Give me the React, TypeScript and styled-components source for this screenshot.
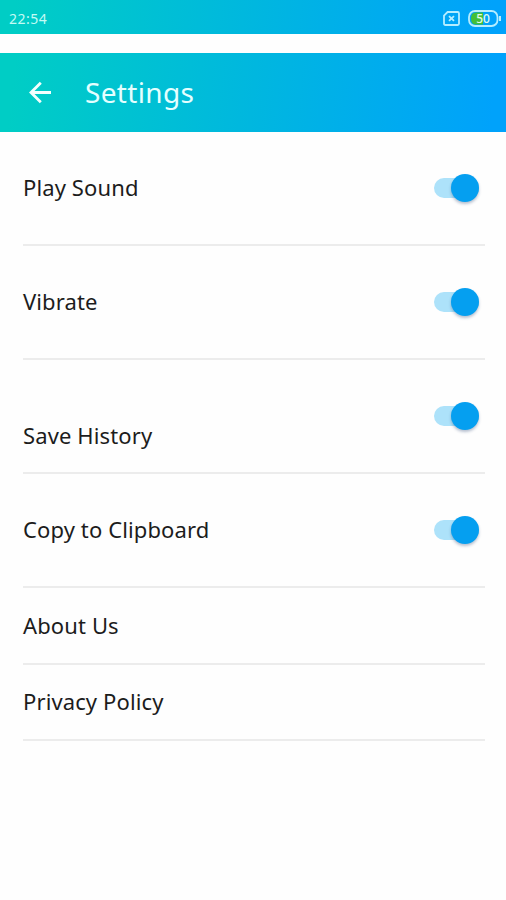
import React, { useState } from 'react';
import styled, { createGlobalStyle } from 'styled-components';

const GlobalStyle = createGlobalStyle`
  * { box-sizing: border-box; }
  body { margin: 0; background: #fff; }
`;

const brandGradient = 'linear-gradient(96deg, #00cdc5 3%, #00b7df 50%, #00a2fb 97%)';

const Screen = styled.main`
  display: flex;
  flex-direction: column;
  width: 506px;
  height: 900px;
  overflow: hidden;
  background: #fefefe;
  font-family: 'Noto Sans', 'Open Sans', sans-serif;
  color: #1c1c1c;
`;

const StatusBar = styled.div`
  display: flex;
  align-items: center;
  justify-content: space-between;
  height: 34px;
  padding: 3px 4px 0 9px;
  background: ${brandGradient};
`;

const Clock = styled.span`
  font-size: 14px;
  line-height: 20px;
  letter-spacing: 0.5px;
  color: #c4fbf5;
`;

const StatusIcons = styled.div`
  display: flex;
  align-items: center;
  gap: 8px;
`;

const AppBar = styled.header`
  display: flex;
  align-items: center;
  gap: 32px;
  height: 79px;
  margin-top: 19px;
  padding-left: 27px;
  background: ${brandGradient};
`;

const BackButton = styled.button`
  display: flex;
  padding: 0;
  border: 0;
  background: none;
  color: #f2fffe;
`;

const Title = styled.h1`
  margin: 0 0 1px;
  font-size: 28px;
  font-weight: 400;
  line-height: 40px;
  letter-spacing: 0.35px;
  color: #e4ffff;
`;

const List = styled.ul`
  margin: 0;
  padding: 0 21px 0 23px;
  list-style: none;
`;

const Row = styled.li<{ $height: number }>`
  display: flex;
  align-items: center;
  justify-content: space-between;
  height: ${({ $height }) => $height}px;
  padding-right: 6px;
  border-bottom: 2px solid #ececec;
`;

const Label = styled.span<{ $drop?: boolean }>`
  padding-top: ${({ $drop }) => ($drop ? 39 : 0)}px;
  padding-bottom: 2px;
  font-size: 22px;
  line-height: 30px;
  letter-spacing: 0.12px;
`;

const Track = styled.button`
  display: flex;
  align-items: center;
  justify-content: flex-end;
  width: 45px;
  height: 20px;
  padding: 0;
  border: 0;
  border-radius: 10px;
  background: #ade2fa;

  &[aria-checked='false'] {
    justify-content: flex-start;
    background: #ccc;
  }
`;

const Thumb = styled.span`
  width: 28px;
  height: 28px;
  flex: none;
  border-radius: 50%;
  background: #059ff0;
  box-shadow: 0 2px 3px rgba(30, 60, 110, 0.32);
`;

function SimIcon() {
  return (
    <svg width="17" height="15" viewBox="0 0 17 15" fill="none" stroke="#b5edff" strokeWidth="1.8">
      <path d="M4.6 1H14.6Q16 1 16 2.4V12.6Q16 14 14.6 14H2.4Q1 14 1 12.6V4.6Z" />
      <path d="M6 5.2 11 9.9M11 5.2 6 9.9" />
    </svg>
  );
}

function BatteryIcon() {
  return (
    <svg width="34" height="17" viewBox="0 0 34 17">
      <path d="M8 2.5H15V14.5H8Q3 14.5 3 8.5T8 2.5Z" fill="#43bf36" />
      <rect x="1" y="1" width="28.5" height="15" rx="6" fill="none" stroke="#b5edff" strokeWidth="1.8" />
      <path d="M32 6V11" stroke="#b5edff" strokeWidth="2" />
      <text x="15" y="12.7" textAnchor="middle" fontSize="12" fontWeight="500" fill="#e0fbe9">50</text>
    </svg>
  );
}

function BackIcon() {
  return (
    <svg width="26" height="26" viewBox="0 0 26 26" fill="none" stroke="currentColor" strokeWidth="2.8">
      <path d="M24 12.5H4M13.8 2.8 4 12.5 13.8 22.2" />
    </svg>
  );
}

function Toggle({ label }: { label: string }) {
  const [on, setOn] = useState(true);
  return (
    <Track role="switch" aria-label={label} aria-checked={on} onClick={() => setOn(!on)}>
      <Thumb />
    </Track>
  );
}

const settings = [
  { label: 'Play Sound', height: 114, toggle: true },
  { label: 'Vibrate', height: 114, toggle: true },
  { label: 'Save History', height: 114, toggle: true, drop: true },
  { label: 'Copy to Clipboard', height: 114, toggle: true },
  { label: 'About Us', height: 77 },
  { label: 'Privacy Policy', height: 76 },
];

export default function App() {
  return (
    <Screen>
      <GlobalStyle />
      <StatusBar>
        <Clock>22:54</Clock>
        <StatusIcons>
          <SimIcon />
          <BatteryIcon />
        </StatusIcons>
      </StatusBar>
      <AppBar>
        <BackButton aria-label="Back"><BackIcon /></BackButton>
        <Title>Settings</Title>
      </AppBar>
      <List>
        {settings.map(({ label, height, toggle, drop }) => (
          <Row key={label} $height={height}>
            <Label $drop={drop}>{label}</Label>
            {toggle && <Toggle label={label} />}
          </Row>
        ))}
      </List>
    </Screen>
  );
}
